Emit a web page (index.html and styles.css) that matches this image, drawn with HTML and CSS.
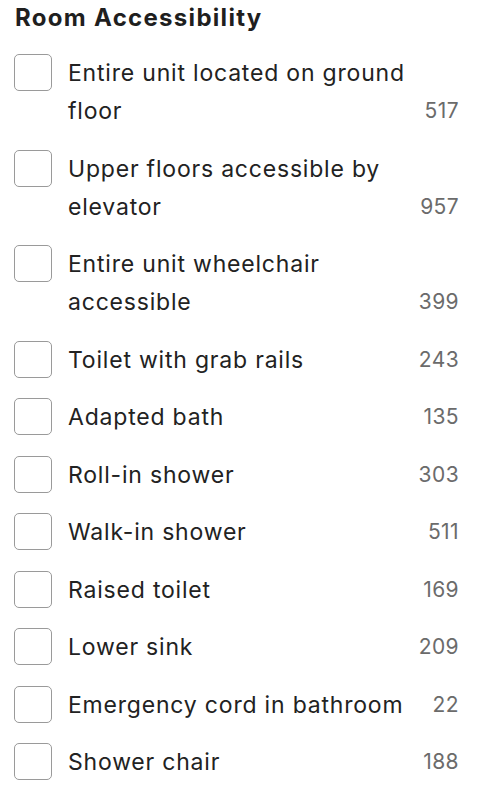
FILE: index.html
```html
<!DOCTYPE html>
<html lang="en">
<head>
    <meta charset="UTF-8">
    <meta name="viewport" content="width=device-width, initial-scale=1.0">
    <title>Room Accessibility</title>
    <link rel="stylesheet" href="styles.css">
</head>
<body>
    <div class="filter">
        <h2>Room Accessibility</h2>
        <ul class="options">
            <li class="option">
                <span class="box"></span>
                <span class="label">Entire unit located on ground floor</span>
                <span class="count">517</span>
            </li>
            <li class="option">
                <span class="box"></span>
                <span class="label">Upper floors accessible by elevator</span>
                <span class="count">957</span>
            </li>
            <li class="option">
                <span class="box"></span>
                <span class="label">Entire unit wheelchair accessible</span>
                <span class="count">399</span>
            </li>
            <li class="option">
                <span class="box"></span>
                <span class="label">Toilet with grab rails</span>
                <span class="count">243</span>
            </li>
            <li class="option">
                <span class="box"></span>
                <span class="label">Adapted bath</span>
                <span class="count">135</span>
            </li>
            <li class="option">
                <span class="box"></span>
                <span class="label">Roll-in shower</span>
                <span class="count">303</span>
            </li>
            <li class="option">
                <span class="box"></span>
                <span class="label">Walk-in shower</span>
                <span class="count">511</span>
            </li>
            <li class="option">
                <span class="box"></span>
                <span class="label">Raised toilet</span>
                <span class="count">169</span>
            </li>
            <li class="option">
                <span class="box"></span>
                <span class="label">Lower sink</span>
                <span class="count">209</span>
            </li>
            <li class="option">
                <span class="box"></span>
                <span class="label">Emergency cord in bathroom</span>
                <span class="count">22</span>
            </li>
            <li class="option">
                <span class="box"></span>
                <span class="label">Shower chair</span>
                <span class="count">188</span>
            </li>
        </ul>
    </div>
</body>
</html>
```

FILE: styles.css
```css
body {
    font-family: Inter, "Liberation Sans", Arial, sans-serif;
    margin: 0;
    padding: 0;
    background-color: #fff;
    color: #222;
}
.filter {
    padding: 4px 21px 0 14px;
}
h2 {
    font-size: 24px;
    font-weight: 700;
    line-height: 28px;
    letter-spacing: 1.3px;
    margin: 0 0 0 1px;
    color: #1f1f1f;
}
.options {
    list-style: none;
    margin: 22px 0 0;
    padding: 0;
    display: flex;
    flex-direction: column;
    gap: 19.5px;
}
.option {
    display: flex;
    align-items: flex-end;
    font-size: 23px;
    line-height: 38px;
    letter-spacing: 0.8px;
}
.box {
    flex: none;
    align-self: flex-start;
    box-sizing: border-box;
    width: 38px;
    height: 37px;
    border: 1.5px solid #9a9a9a;
    border-radius: 5px;
}
.label {
    flex: 1;
    margin-left: 16px;
}
.count {
    flex: none;
    width: 50px;
    text-align: right;
    color: #6b6b6b;
    font-size: 21px;
    letter-spacing: 0.4px;
}
```
